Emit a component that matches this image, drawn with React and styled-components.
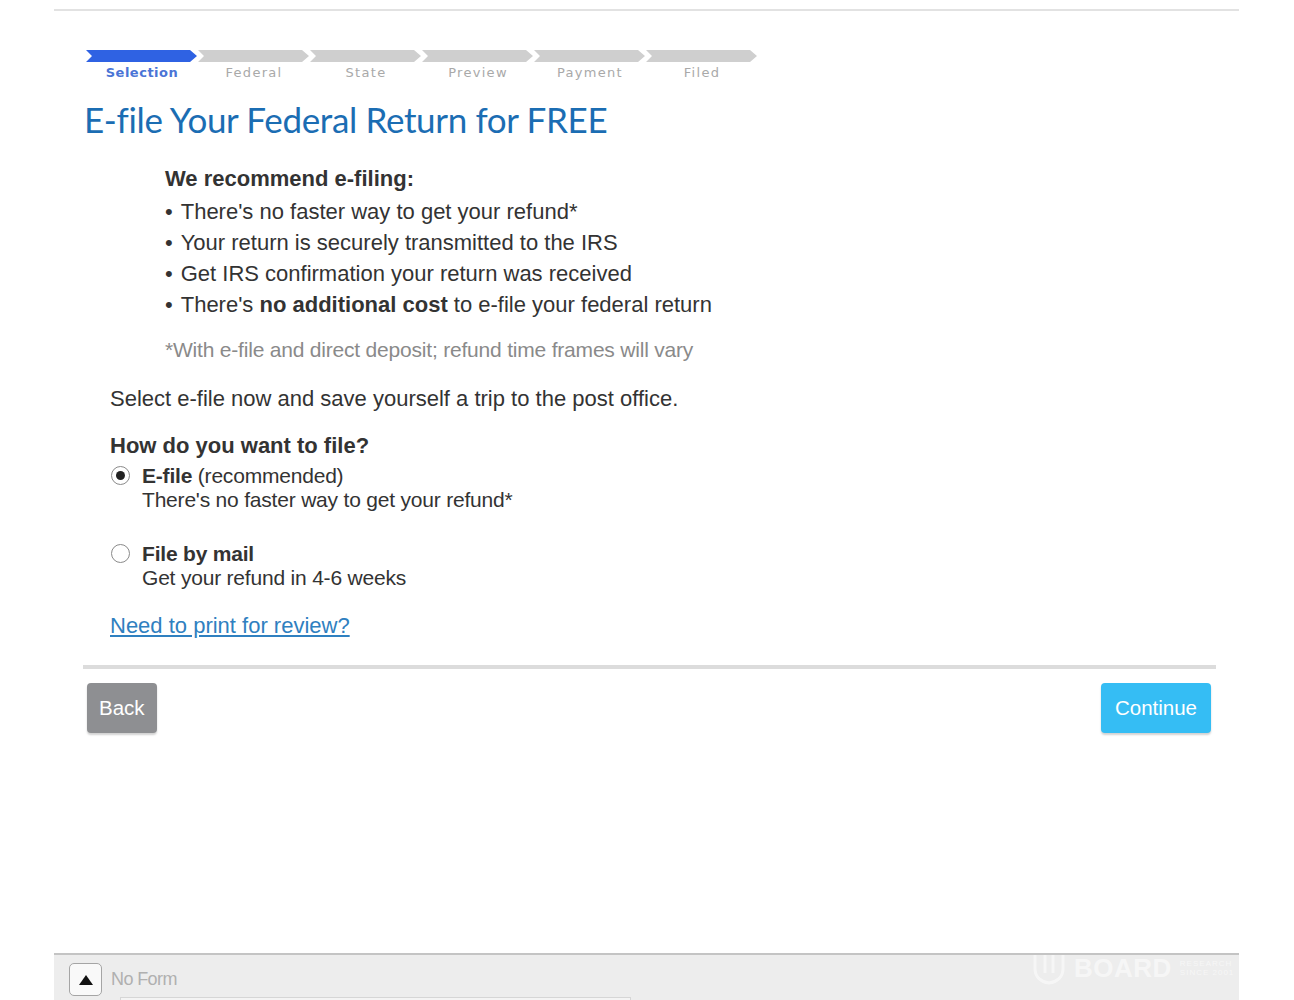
import React from "react";
import styled, { createGlobalStyle } from "styled-components";

const Global = createGlobalStyle`
  html, body { margin: 0; padding: 0; background: #fff; }
  body { font-family: "Liberation Sans", Arial, sans-serif; color: #333; }
  * { box-sizing: border-box; }
`;

const Page = styled.div`
  width: 1185px;
  margin-left: 54px;
  display: flex;
  flex-direction: column;
`;

const TopRule = styled.div`
  height: 2px;
  margin-top: 9px;
  background: #e2e2e2;
`;

const Main = styled.main`
  padding: 0 23px 0 30px;
  display: flex;
  flex-direction: column;
`;

const Steps = styled.ol`
  list-style: none;
  margin: 39px 0 0 2px;
  padding: 0;
  display: flex;
`;

const Step = styled.li`
  width: 112px;
  display: flex;
  flex-direction: column;
  align-items: center;
`;

const Chevron = styled.div`
  align-self: flex-start;
  width: 111px;
  height: 12px;
  background: ${(p) => (p.$active ? "#2f62e3" : "#cfcfcf")};
  clip-path: polygon(0 0, calc(100% - 7px) 0, 100% 50%, calc(100% - 7px) 100%, 0 100%, 6px 50%);
`;

const StepLabel = styled.span`
  margin-top: 3px;
  font-family: "DejaVu Sans", Verdana, sans-serif;
  font-size: 13px;
  letter-spacing: ${(p) => (p.$active ? "0.5px" : "1.3px")};
  font-weight: ${(p) => (p.$active ? 700 : 400)};
  color: ${(p) => (p.$active ? "#4a74d6" : "#a9a9a9")};
  line-height: 15px;
`;

const Title = styled.h1`
  margin: 19px 0 0 0;
  font-family: Lato, "Open Sans", sans-serif;
  font-weight: 400;
  font-size: 35px;
  line-height: 40px;
  color: #1b6db3;
  letter-spacing: -0.35px;
`;

const Recommend = styled.section`
  margin: 24px 0 0 81px;
  display: flex;
  flex-direction: column;
`;

const SubHead = styled.h2`
  margin: 0;
  font-size: 22px;
  font-weight: 700;
  line-height: 31px;
  color: #333;
`;

const Bullets = styled.ul`
  margin: 2px 0 0 0;
  padding: 0;
  list-style: none;
`;

const Bullet = styled.li`
  font-size: 22px;
  line-height: 31px;
  color: #333;
  display: flex;
  gap: 8px;
  &::before {
    content: "•";
  }
  b { font-weight: 700; }
`;

const Footnote = styled.p`
  margin: 15px 0 0 0;
  font-size: 21px;
  line-height: 30px;
  color: #8a8a8a;
  letter-spacing: -0.2px;
`;

const Body = styled.section`
  margin-left: 26px;
  display: flex;
  flex-direction: column;
`;

const Para = styled.p`
  margin: 19px 0 0 0;
  font-size: 22px;
  line-height: 30px;
  color: #333;
`;

const Question = styled.h3`
  margin: 17px 0 0 0;
  font-size: 22px;
  line-height: 30px;
  font-weight: 700;
  color: #333;
`;

const Option = styled.label`
  display: grid;
  grid-template-columns: 32px auto;
  margin-top: ${(p) => p.$mt || 0}px;
  font-size: 21px;
  line-height: 24px;
  color: #333;
  letter-spacing: -0.2px;
  b { font-weight: 700; }
`;

const Radio = styled.span`
  width: 19px;
  height: 19px;
  margin: 2px 0 0 1px;
  border-radius: 50%;
  border: 1px solid #8a8a8a;
  background: #fff;
  display: flex;
  align-items: center;
  justify-content: center;
  &::after {
    content: "";
    width: 9px;
    height: 9px;
    border-radius: 50%;
    background: ${(p) => (p.$checked ? "#222" : "transparent")};
  }
`;

const OptionText = styled.span`
  display: flex;
  flex-direction: column;
`;

const Link = styled.a`
  margin-top: 21px;
  align-self: flex-start;
  font-size: 22px;
  line-height: 30px;
  color: #2f80c0;
  text-decoration: underline;
`;

const Divider = styled.hr`
  margin: 24px 0 0 -1px;
  border: 0;
  height: 4px;
  background: #dcdcdc;
`;

const Actions = styled.div`
  margin-top: 14px;
  display: flex;
  justify-content: space-between;
  padding: 0 5px 0 3px;
`;

const Button = styled.button`
  height: 50px;
  padding: 0 ${(p) => (p.$primary ? 14 : 12)}px;
  border: 0;
  border-radius: 4px;
  font-family: "Liberation Sans", Arial, sans-serif;
  font-size: 20.5px;
  color: #fff;
  background: ${(p) => (p.$primary ? "#35bdf4" : "#8e8f92")};
  box-shadow: 0 2px 2px rgba(0, 0, 0, 0.18);
`;

const Footer = styled.footer`
  margin-top: 220px;
  height: 60px;
  border-top: 2px solid #c4c4c4;
  background: #ededed;
  display: flex;
  align-items: flex-start;
  padding: 8px 0 0 15px;
  position: relative;
  overflow: hidden;
`;

const UpButton = styled.button`
  width: 33px;
  height: 33px;
  border: 1px solid #a5a5a5;
  border-radius: 5px;
  background: #f9f9f9;
  display: flex;
  align-items: center;
  justify-content: center;
  padding: 0;
`;

const FormLabel = styled.span`
  margin: 6px 0 0 9px;
  font-size: 18px;
  color: #b0b0b0;
  letter-spacing: -0.6px;
`;

const FormField = styled.div`
  position: absolute;
  left: 66px;
  top: 42px;
  width: 511px;
  height: 20px;
  border: 1px solid #d6d6d6;
  background: #f4f4f4;
`;

const Watermark = styled.div`
  position: absolute;
  left: 978px;
  top: -4px;
  display: flex;
  align-items: center;
  gap: 8px;
  opacity: 0.55;
  color: #fff;
  font-family: "Liberation Sans", Arial, sans-serif;
`;

const MarkWord = styled.span`
  font-weight: 700;
  font-size: 26px;
  letter-spacing: 0.5px;
`;

const MarkSmall = styled.span`
  display: flex;
  flex-direction: column;
  font-size: 8px;
  line-height: 9px;
  letter-spacing: 1px;
`;

const steps = ["Selection", "Federal", "State", "Preview", "Payment", "Filed"];

export default function App() {
  return (
    <>
      <Global />
      <Page>
        <TopRule />
        <Main>
          <Steps>
            {steps.map((s, i) => (
              <Step key={s}>
                <Chevron $active={i === 0} />
                <StepLabel $active={i === 0}>{s}</StepLabel>
              </Step>
            ))}
          </Steps>
          <Title>E-file Your Federal Return for FREE</Title>
          <Recommend>
            <SubHead>We recommend e-filing:</SubHead>
            <Bullets>
              <Bullet>There's no faster way to get your refund*</Bullet>
              <Bullet>Your return is securely transmitted to the IRS</Bullet>
              <Bullet>Get IRS confirmation your return was received</Bullet>
              <Bullet>
                <span>
                  There's <b>no additional cost</b> to e-file your federal return
                </span>
              </Bullet>
            </Bullets>
            <Footnote>*With e-file and direct deposit; refund time frames will vary</Footnote>
          </Recommend>
          <Body>
            <Para>Select e-file now and save yourself a trip to the post office.</Para>
            <Question>How do you want to file?</Question>
            <Option $mt={3}>
              <Radio $checked />
              <OptionText>
                <span>
                  <b>E-file</b> (recommended)
                </span>
                <span>There's no faster way to get your refund*</span>
              </OptionText>
            </Option>
            <Option $mt={30}>
              <Radio />
              <OptionText>
                <b>File by mail</b>
                <span>Get your refund in 4-6 weeks</span>
              </OptionText>
            </Option>
            <Link href="#">Need to print for review?</Link>
          </Body>
          <Divider />
          <Actions>
            <Button>Back</Button>
            <Button $primary>Continue</Button>
          </Actions>
        </Main>
        <Footer>
          <UpButton aria-label="expand">
            <svg width="14" height="10" viewBox="0 0 14 10">
              <path d="M7 0 L14 10 L0 10 Z" fill="#111" />
            </svg>
          </UpButton>
          <FormLabel>No Form</FormLabel>
          <FormField />
          <Watermark>
            <svg width="34" height="34" viewBox="0 0 34 34">
              <path d="M3 2 V18 C3 26 9 31 17 32 C25 31 31 26 31 18 V2" fill="none" stroke="#fff" strokeWidth="3" />
              <path d="M13 2 V22 M21 2 V22" stroke="#fff" strokeWidth="3" />
            </svg>
            <MarkWord>BOARD</MarkWord>
            <MarkSmall>
              <span>RESEARCH</span>
              <span>SINCE 2001</span>
            </MarkSmall>
          </Watermark>
        </Footer>
      </Page>
    </>
  );
}
